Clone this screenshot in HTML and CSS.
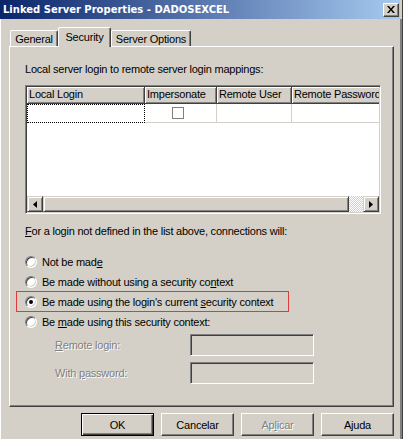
FILE: index.html
```html
<!DOCTYPE html>
<html>
<head>
<meta charset="utf-8">
<link rel="stylesheet" href="styles.css">
</head>
<body>
<div class="window">
  <div class="titlebar">
    <span class="title">Linked Server Properties - DADOSEXCEL</span>
    <span class="close"><svg width="8" height="7" viewBox="0 0 8 7"><path d="M0 0h2l2 2.5L6 0h2L5 3.5 8 7H6L4 4.5 2 7H0l3-3.5z" fill="#000"/></svg></span>
  </div>
  <div class="body">
    <div class="tabs">
      <div class="tab tab-general">General</div>
      <div class="tab tab-security active">Security</div>
      <div class="tab tab-options">Server Options</div>
    </div>
    <div class="panel">
      <p class="label first">Local server login to remote server login mappings:</p>
      <div class="grid">
        <div class="grid-head">
          <div class="th c1">Local Login</div>
          <div class="th c2">Impersonate</div>
          <div class="th c3">Remote User</div>
          <div class="th c4">Remote Password</div>
        </div>
        <div class="grid-row">
          <div class="td c1 focus"></div>
          <div class="td c2"><span class="checkbox"></span></div>
          <div class="td c3"></div>
          <div class="td c4"></div>
        </div>
        <div class="grid-fill"></div>
        <div class="hscroll">
          <div class="sb-btn"><svg width="4" height="7" viewBox="0 0 4 7"><path d="M4 0v7L0 3.5z" fill="#000"/></svg></div>
          <div class="sb-thumb"></div>
          <div class="sb-track"></div>
          <div class="sb-btn"><svg width="4" height="7" viewBox="0 0 4 7"><path d="M0 0v7l4-3.5z" fill="#000"/></svg></div>
        </div>
      </div>
      <p class="label second"><u>F</u>or a login not defined in the list above, connections will:</p>
      <div class="radios">
        <div class="radio-row"><span class="radio"></span><span>Not be mad<u>e</u></span></div>
        <div class="radio-row"><span class="radio"></span><span>Be made without using a security co<u>n</u>text</span></div>
        <div class="radio-row highlight"><span class="radio checked"></span><span>Be made using the login's current <u>s</u>ecurity context</span></div>
        <div class="radio-row"><span class="radio"></span><span>Be <u>m</u>ade using this security context:</span></div>
      </div>
      <div class="creds">
        <div class="cred-row"><span class="cred-label disabled"><u>R</u>emote login:</span><span class="edit"></span></div>
        <div class="cred-row"><span class="cred-label disabled">With <u>p</u>assword:</span><span class="edit"></span></div>
      </div>
    </div>
    <div class="buttons">
      <div class="btn default">OK</div>
      <div class="btn">Cancelar</div>
      <div class="btn disabled">Ap<u>l</u>icar</div>
      <div class="btn">Ajuda</div>
    </div>
  </div>
</div>
</body>
</html>
```

FILE: styles.css
```css
* { box-sizing: border-box; }
html, body { margin: 0; padding: 0; }
body {
  background: #d4d0c8;
  font-family: "Liberation Sans", Arial, sans-serif;
  font-size: 11px;
  letter-spacing: -0.22px;
  color: #000;
}
.window {
  width: 403px;
  height: 439px;
  background: #d4d0c8;
  border-right: 1px solid #404040;
  display: flex;
  flex-direction: column;
  overflow: hidden;
}
.titlebar {
  height: 19px;
  display: flex;
  align-items: center;
  justify-content: space-between;
  padding: 0 1px 0 3px;
  margin-right: 2px;
  background: linear-gradient(to right, #0a246a, #a6caf0);
  flex: none;
}
.title {
  color: #fff;
  font-family: "DejaVu Sans", Verdana, sans-serif;
  font-weight: bold;
  font-size: 10px;
  letter-spacing: 0;
  white-space: nowrap;
}
.close {
  width: 16px;
  height: 14px;
  background: #d4d0c8;
  border: 1px solid;
  border-color: #fff #404040 #404040 #fff;
  box-shadow: inset -1px -1px #808080;
  display: flex;
  align-items: center;
  justify-content: center;
  padding-bottom: 1px;
}
.body {
  flex: 1;
  padding: 8px 6px 0 9px;
  border-right: 2px solid #808080;
  box-shadow: inset 1px 0 #fff;
  display: flex;
  flex-direction: column;
}
.tabs {
  display: flex;
  align-items: flex-end;
  height: 19px;
  padding-left: 1px;
}
.tab {
  height: 16px;
  background: #d4d0c8;
  border-top: 1px solid #fff;
  border-left: 1px solid #fff;
  border-right: 1px solid #404040;
  border-radius: 2px 2px 0 0;
  box-shadow: inset -1px 0 #808080;
  display: flex;
  align-items: center;
  justify-content: center;
  white-space: nowrap;
  padding-top: 1px;
}
.tab-general { width: 48px; }
.tab-security { width: 53px; }
.tab-options { width: 80px; }
.tab.active {
  height: 20px;
  margin-bottom: -1px;
  position: relative;
  z-index: 1;
  padding-bottom: 3px;
}
.panel {
  height: 361px;
  border-top: 1px solid #fff;
  border-left: 1px solid #fff;
  border-right: 1px solid #404040;
  border-bottom: 1px solid #404040;
  box-shadow: inset -1px -1px #808080;
  padding: 0 12px 0 15px;
  display: flex;
  flex-direction: column;
}
.label {
  margin: 0;
  line-height: 13px;
  white-space: nowrap;
}
.label.first { margin-top: 16px; }
.label.second { margin-top: 11px; }
.grid {
  margin-top: 9px;
  width: 356px;
  height: 129px;
  border: 1px solid;
  border-color: #808080 #fff #fff #808080;
  box-shadow: inset 1px 1px #404040, inset -1px -1px #d4d0c8;
  padding: 1px;
  display: flex;
  flex-direction: column;
  background: #fff;
  overflow: hidden;
}
.grid-head, .grid-row {
  display: flex;
  flex: none;
}
.grid-head { height: 17px; }
.grid-row { height: 19px; }
.th {
  background: #d4d0c8;
  border-right: 1px solid #404040;
  border-bottom: 1px solid #404040;
  box-shadow: inset 1px 1px #fff, inset -1px -1px #808080;
  padding: 0 2px;
  line-height: 15px;
  white-space: nowrap;
  overflow: hidden;
}
.c1 { width: 118px; flex: none; }
.c2 { width: 72px; flex: none; }
.c3 { width: 75px; flex: none; }
.c4 { flex: 1; min-width: 0; }
.th.c4 { border-right: none; box-shadow: inset 1px 1px #fff, inset 0 -1px #808080; }
.td {
  border-right: 1px solid #d4d0c8;
  border-bottom: 1px solid #d4d0c8;
  display: flex;
  align-items: center;
  justify-content: center;
}
.td.c4 { border-right: none; }
.td.focus {
  border: 1px dotted #000;
}
.checkbox {
  width: 12px;
  height: 12px;
  border: 1px solid #808080;
  background: #fff;
  margin-right: 6px;
}
.grid-fill { flex: 1; }
.hscroll {
  height: 16px;
  display: flex;
  flex: none;
}
.sb-btn, .sb-thumb {
  background: #d4d0c8;
  border: 1px solid;
  border-color: #d4d0c8 #404040 #404040 #d4d0c8;
  box-shadow: inset 1px 1px #fff, inset -1px -1px #808080;
}
.sb-btn {
  width: 16px;
  display: flex;
  align-items: center;
  justify-content: center;
  flex: none;
}
.sb-thumb { flex: 1; }
.sb-track {
  width: 14px;
  flex: none;
  background: repeating-conic-gradient(#fff 0 25%, #d4d0c8 0 50%) 0 0 / 2px 2px;
}
.radios {
  margin-top: 14px;
  display: flex;
  flex-direction: column;
}
.radio-row {
  height: 20px;
  display: flex;
  align-items: center;
  gap: 5px;
  white-space: nowrap;
}
.radio-row.highlight { position: relative; }
.radio-row.highlight::after {
  content: "";
  position: absolute;
  left: -9px;
  top: -1px;
  bottom: 0;
  width: 271px;
  border: 1px solid #e03a3a;
}
.radio {
  width: 12px;
  height: 12px;
  border-radius: 50%;
  border: 1px solid;
  border-color: #808080 #fff #fff #808080;
  box-shadow: inset 1px 1px #404040, inset -1px -1px #d4d0c8;
  background: #fff;
  flex: none;
  display: flex;
  align-items: center;
  justify-content: center;
}
.radio.checked::before {
  content: "";
  width: 4px;
  height: 4px;
  border-radius: 50%;
  background: #000;
}
.creds {
  margin-top: 2px;
  display: flex;
  flex-direction: column;
  gap: 6px;
}
.cred-row {
  display: flex;
  align-items: center;
  height: 22px;
  padding-left: 30px;
}
.cred-label { width: 135px; flex: none; white-space: nowrap; }
.disabled {
  color: #808080;
  text-shadow: 1px 1px #fff;
}
.edit {
  width: 124px;
  height: 22px;
  border: 1px solid;
  border-color: #808080 #fff #fff #808080;
  box-shadow: inset 1px 1px #404040, inset -1px -1px #d4d0c8;
  background: #d4d0c8;
}
.buttons {
  margin-top: 6px;
  display: flex;
  justify-content: flex-end;
  gap: 7px;
}
.btn {
  width: 73px;
  height: 23px;
  display: flex;
  align-items: center;
  justify-content: center;
  border: 1px solid;
  border-color: #fff #404040 #404040 #fff;
  box-shadow: inset -1px -1px #808080;
  white-space: nowrap;
}
.btn.default {
  border-color: #000;
  box-shadow: inset 1px 1px #fff, inset -1px -1px #404040, inset -2px -2px #808080;
}
```
